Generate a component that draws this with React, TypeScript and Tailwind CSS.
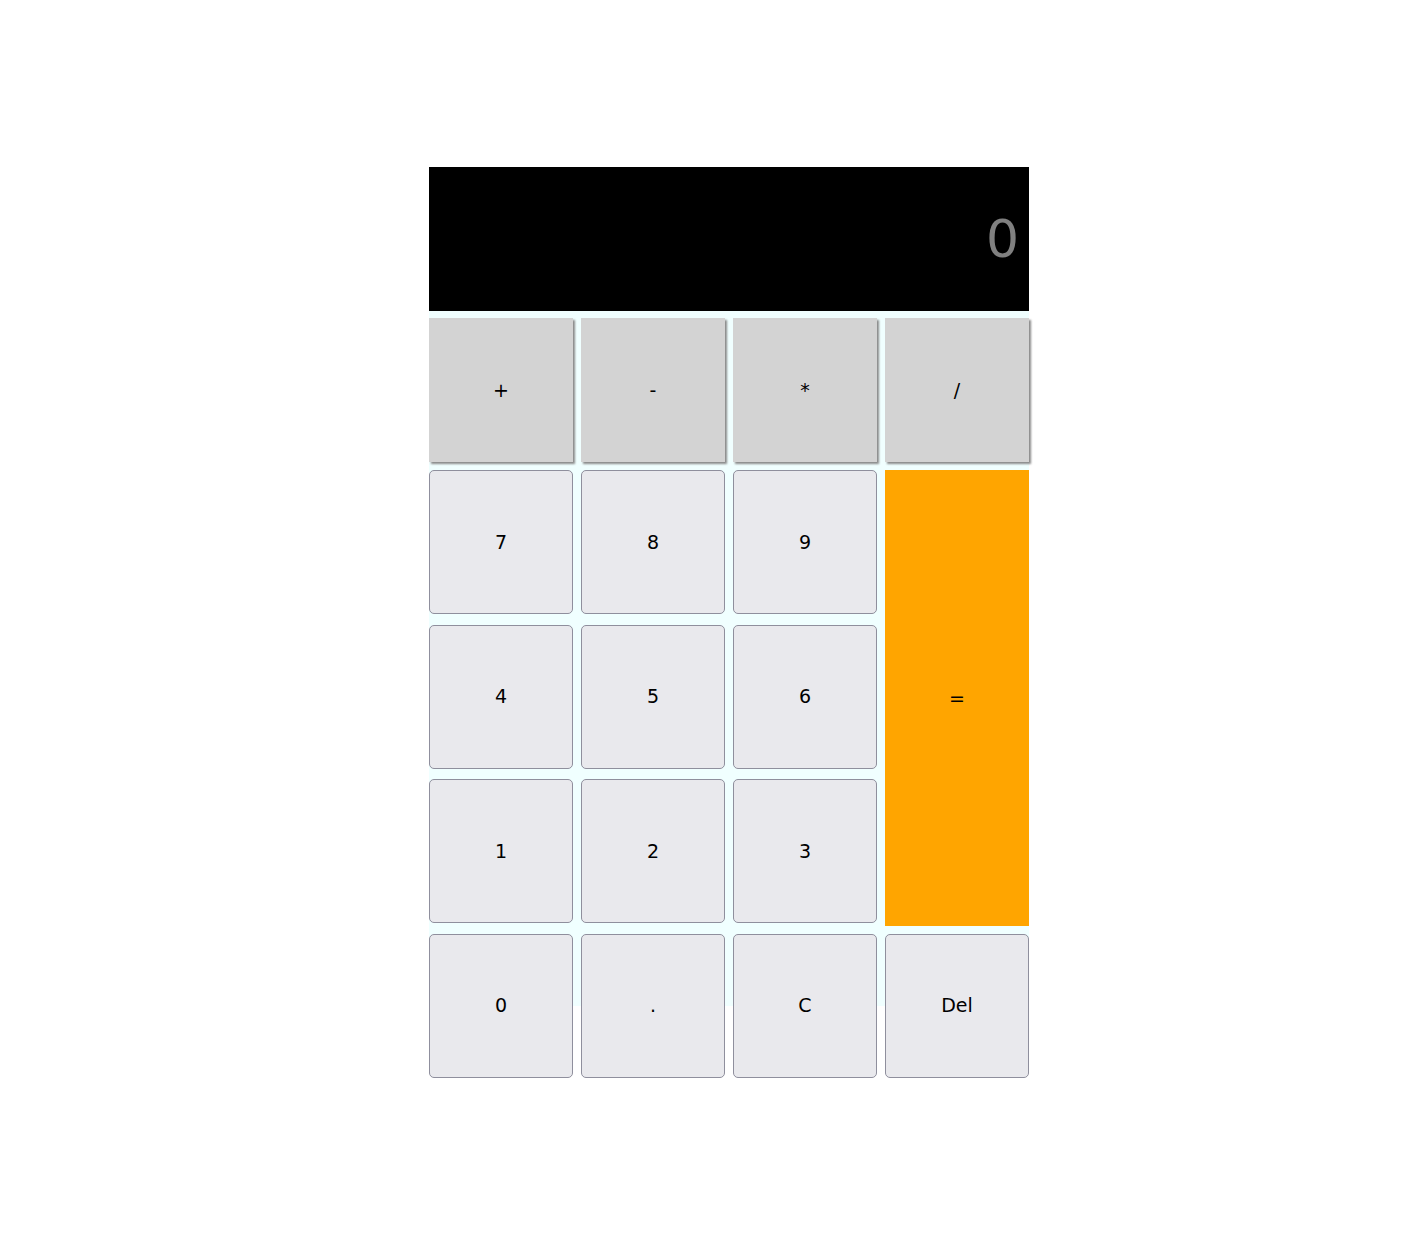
export default function App() {
  const ops = ['+', '-', '*', '/']
  const rows = [
    ['7', '8', '9'],
    ['4', '5', '6'],
    ['1', '2', '3'],
  ]
  const last = ['0', '.', 'C', 'Del']

  const numBtn =
    'h-[144px] self-start bg-[#e9e9ed] border border-[#8f8f9d] rounded-[5px] text-black text-[19px]'

  return (
    <div className="min-h-[1239px] bg-white pt-[167px] font-['DejaVu_Sans',sans-serif]">
      <div className="ml-[429px] w-[600px] h-[839px] bg-[#f0ffff] flex flex-col gap-[7px]">
        {/* Display */}
        <div className="h-[144px] shrink-0 bg-black flex items-center justify-end pr-[10px]">
          <span className="text-[52px] text-[#808080] leading-none">0</span>
        </div>

        {/* Operators */}
        <div className="grid grid-cols-4 gap-x-2 h-[145px] shrink-0">
          {ops.map((op) => (
            <button
              key={op}
              className="h-[144px] bg-[#d3d3d3] text-black text-[19px] shadow-[2px_2px_2px_#8a8a8a]"
            >
              {op}
            </button>
          ))}
        </div>

        {/* Keypad */}
        <div className="grid grid-cols-4 grid-rows-[147px_147px_147px_147px] gap-x-2 gap-y-[7.5px] shrink-0">
          {rows.map((row, i) => (
            <>
              {row.map((k) => (
                <button key={k} className={numBtn}>
                  {k}
                </button>
              ))}
              {i === 0 && (
                <button className="row-span-3 bg-[#ffa500] text-black text-[19px]">=</button>
              )}
            </>
          ))}
          {last.map((k) => (
            <button key={k} className={numBtn}>
              {k}
            </button>
          ))}
        </div>
      </div>
    </div>
  )
}
